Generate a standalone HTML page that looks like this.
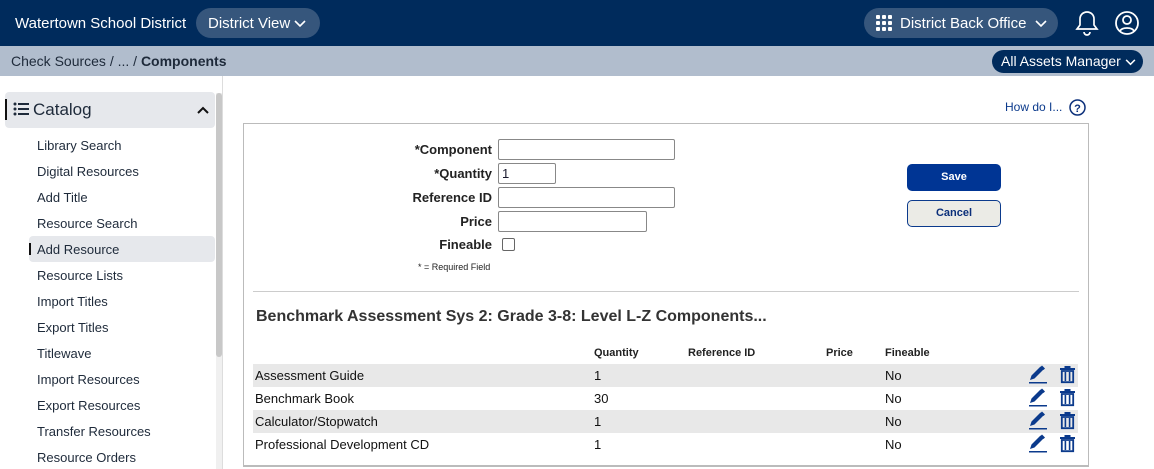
<!DOCTYPE html>
<html><head><style>
*{box-sizing:border-box;margin:0;padding:0}
body{width:1154px;height:469px;overflow:hidden;background:#fff;font-family:"Liberation Sans",Arial,sans-serif;position:relative;color:#1a1a2e}
.abs{position:absolute}
.hdr{left:0;top:0;width:1154px;height:46px;background:#002b5c}
.pill{background:#36567c;border-radius:15px;color:#fff;font-size:15px;height:30px;line-height:31px}
.bc{left:0;top:46px;width:1154px;height:30px;background:#b1bdcd;font-size:14px;line-height:30px;padding-left:11px;color:#1e2a3a}
.side a{position:absolute;left:37px;font-size:13px;color:#1e2a3a;text-decoration:none}
.lbl{position:absolute;font-size:13px;font-weight:bold;text-align:right;color:#222;width:120px}
.in{position:absolute;border:1px solid #888;border-radius:2px;height:21px;background:#fff;font-size:13px;padding-left:3px;line-height:19px}
.row{position:absolute;left:253px;width:825px;height:23px;font-size:13px;line-height:23px;color:#111}
.row span{position:absolute}
.th{position:absolute;top:347px;font-size:11px;font-weight:bold;color:#222}
</style></head><body>
<div class="abs hdr"></div>
<div class="abs" style="left:15px;top:15px;color:#fff;font-size:15px">Watertown School District</div>
<div class="abs pill" style="left:196px;top:8px;width:124px;padding-left:12px">District View <svg width="12" height="8" viewBox="0 0 12 8" style="vertical-align:middle"><path d="M1 1l5 5 5-5" stroke="#fff" stroke-width="1.6" fill="none"/></svg></div>
<div class="abs pill" style="left:864px;top:8px;width:194px;padding-left:36px">District Back Office <svg width="12" height="8" viewBox="0 0 12 8" style="vertical-align:middle;margin-left:4px"><path d="M1 1l5 5 5-5" stroke="#fff" stroke-width="1.6" fill="none"/></svg></div>
<svg class="abs" style="left:876px;top:15px" width="16" height="16" viewBox="0 0 16 16" fill="#fff"><rect x="0" y="0" width="4" height="4" rx="1"/><rect x="6" y="0" width="4" height="4" rx="1"/><rect x="12" y="0" width="4" height="4" rx="1"/><rect x="0" y="6" width="4" height="4" rx="1"/><rect x="6" y="6" width="4" height="4" rx="1"/><rect x="12" y="6" width="4" height="4" rx="1"/><rect x="0" y="12" width="4" height="4" rx="1"/><rect x="6" y="12" width="4" height="4" rx="1"/><rect x="12" y="12" width="4" height="4" rx="1"/></svg>
<svg class="abs" style="left:1075px;top:10px" width="24" height="26" viewBox="0 0 24 26"><path d="M12 2c-4 0-7 3-7 7v6l-3 4h20l-3-4V9c0-4-3-7-7-7z" stroke="#fff" stroke-width="1.7" fill="none"/><path d="M9 22a3 3 0 0 0 6 0" stroke="#fff" stroke-width="1.7" fill="none"/></svg>
<svg class="abs" style="left:1114px;top:10px" width="26" height="26" viewBox="0 0 26 26"><circle cx="13" cy="13" r="11" stroke="#fff" stroke-width="1.8" fill="none"/><circle cx="13" cy="10" r="4" stroke="#fff" stroke-width="1.8" fill="none"/><path d="M6 21c2-4 12-4 14 0" stroke="#fff" stroke-width="1.8" fill="none"/></svg>
<div class="abs bc">Check Sources / ... / <b>Components</b></div>
<div class="abs" style="left:992px;top:50px;width:151px;height:23px;background:#002b5c;border-radius:12px;color:#fff;font-size:14px;line-height:23px;padding-left:9px">All Assets Manager <svg width="11" height="7" viewBox="0 0 12 8" style="vertical-align:middle"><path d="M1 1l5 5 5-5" stroke="#fff" stroke-width="1.8" fill="none"/></svg></div>
<div class="abs" style="left:222px;top:76px;width:1px;height:393px;background:#ddd"></div>
<div class="abs" style="left:216px;top:93px;width:6px;height:376px;background:#f0f0f0"></div>
<div class="abs" style="left:216px;top:93px;width:6px;height:264px;background:#c8c8c8;border-radius:3px"></div>
<div class="abs" style="left:5px;top:92px;width:210px;height:36px;background:#e6e8ec;border-radius:4px"></div>
<div class="abs" style="left:5px;top:99px;width:2px;height:21px;background:#111"></div>
<svg class="abs" style="left:13px;top:102px" width="16" height="14" viewBox="0 0 16 14" fill="#1e2a3a"><circle cx="2" cy="2" r="1.5"/><circle cx="2" cy="7" r="1.5"/><circle cx="2" cy="12" r="1.5"/><rect x="5" y="1" width="11" height="2"/><rect x="5" y="6" width="11" height="2"/><rect x="5" y="11" width="11" height="2"/></svg>
<div class="abs" style="left:33px;top:100px;font-size:17px;color:#1e2a3a">Catalog</div>
<svg class="abs" style="left:197px;top:106px" width="12" height="8" viewBox="0 0 12 8"><path d="M1 7l5-5 5 5" stroke="#111" stroke-width="2" fill="none"/></svg>
<div class="abs" style="left:29px;top:236px;width:186px;height:26px;background:#e6e8ec;border-radius:4px"></div>
<div class="abs" style="left:29px;top:243px;width:2px;height:12px;background:#111"></div>
<div class="side">
<a style="top:138px">Library Search</a><a style="top:164px">Digital Resources</a><a style="top:190px">Add Title</a><a style="top:216px">Resource Search</a><a style="top:242px">Add Resource</a><a style="top:268px">Resource Lists</a><a style="top:294px">Import Titles</a><a style="top:320px">Export Titles</a><a style="top:346px">Titlewave</a><a style="top:372px">Import Resources</a><a style="top:398px">Export Resources</a><a style="top:424px">Transfer Resources</a><a style="top:450px">Resource Orders</a>
</div>
<div class="abs" style="left:1005px;top:100px;font-size:12px;color:#0b3a8c">How do I...</div>
<svg class="abs" style="left:1069px;top:99px" width="17" height="17" viewBox="0 0 17 17"><circle cx="8.5" cy="8.5" r="7.5" stroke="#0b2f7a" stroke-width="1.5" fill="none"/><text x="8.5" y="13" font-size="11" font-weight="bold" text-anchor="middle" fill="#0b2f7a" font-family="Liberation Sans">?</text></svg>
<div class="abs" style="left:243px;top:123px;width:846px;height:344px;border:1px solid #bbb;border-bottom:2px solid #bbb"></div>
<div class="lbl" style="left:372px;top:142px">*Component</div>
<div class="lbl" style="left:372px;top:166px">*Quantity</div>
<div class="lbl" style="left:372px;top:190px">Reference ID</div>
<div class="lbl" style="left:372px;top:214px">Price</div>
<div class="lbl" style="left:372px;top:237px">Fineable</div>
<div class="in" style="left:498px;top:139px;width:177px"></div>
<div class="in" style="left:498px;top:163px;width:58px">1</div>
<div class="in" style="left:498px;top:187px;width:177px"></div>
<div class="in" style="left:498px;top:211px;width:149px"></div>
<div class="abs" style="left:502px;top:238px;width:13px;height:13px;border:1px solid #666;border-radius:2px"></div>
<div class="abs" style="left:418px;top:262px;font-size:9px;color:#222">* = Required Field</div>
<div class="abs" style="left:907px;top:164px;width:94px;height:27px;background:#003594;border-radius:5px;color:#fff;font-size:11px;font-weight:bold;text-align:center;line-height:27px">Save</div>
<div class="abs" style="left:907px;top:200px;width:94px;height:27px;background:#ebebe6;border:1px solid #0b3a8c;border-radius:5px;color:#0b2f7a;font-size:11px;font-weight:bold;text-align:center;line-height:25px">Cancel</div>
<div class="abs" style="left:253px;top:291px;width:826px;height:1px;background:#ccc"></div>
<div class="abs" style="left:256px;top:308px;font-size:16px;font-weight:bold;color:#333">Benchmark Assessment Sys 2: Grade 3-8: Level L-Z Components...</div>
<div class="th" style="left:594px">Quantity</div><div class="th" style="left:688px">Reference ID</div><div class="th" style="left:826px">Price</div><div class="th" style="left:885px">Fineable</div>
<div class="row" style="top:364px;background:#e8e8e8"><span style="left:2px">Assessment Guide</span><span style="left:341px">1</span><span style="left:632px">No</span></div>
<div class="row" style="top:387px"><span style="left:2px">Benchmark Book</span><span style="left:341px">30</span><span style="left:632px">No</span></div>
<div class="row" style="top:410px;background:#e8e8e8"><span style="left:2px">Calculator/Stopwatch</span><span style="left:341px">1</span><span style="left:632px">No</span></div>
<div class="row" style="top:433px"><span style="left:2px">Professional Development CD</span><span style="left:341px">1</span><span style="left:632px">No</span></div>
<svg width="0" height="0" style="position:absolute"><defs>
<g id="pen"><path d="M1 15l1.5-4.5 9-9 3 3-9 9z" fill="#0b3a8c"/><path d="M13 0.5l3 3-1.5 1.5-3-3z" fill="#0b3a8c"/><rect x="0" y="17" width="18" height="1.5" fill="#0b3a8c"/></g>
<g id="bin"><rect x="0" y="2" width="15" height="2" fill="#0b3a8c"/><rect x="4.5" y="0" width="6" height="2" fill="#0b3a8c"/><path d="M1.8 5h11.4v11.2h-11.4z" fill="none" stroke="#0b3a8c" stroke-width="1.8"/><rect x="4.6" y="6" width="1.6" height="9" fill="#0b3a8c"/><rect x="8.8" y="6" width="1.6" height="9" fill="#0b3a8c"/></g>
</defs></svg>
<svg class="abs" style="left:1029px;top:365px" width="20" height="20"><use href="#pen"/></svg>
<svg class="abs" style="left:1060px;top:366px" width="16" height="18"><use href="#bin"/></svg>
<svg class="abs" style="left:1029px;top:388px" width="20" height="20"><use href="#pen"/></svg>
<svg class="abs" style="left:1060px;top:389px" width="16" height="18"><use href="#bin"/></svg>
<svg class="abs" style="left:1029px;top:411px" width="20" height="20"><use href="#pen"/></svg>
<svg class="abs" style="left:1060px;top:412px" width="16" height="18"><use href="#bin"/></svg>
<svg class="abs" style="left:1029px;top:434px" width="20" height="20"><use href="#pen"/></svg>
<svg class="abs" style="left:1060px;top:435px" width="16" height="18"><use href="#bin"/></svg>
</body></html>
